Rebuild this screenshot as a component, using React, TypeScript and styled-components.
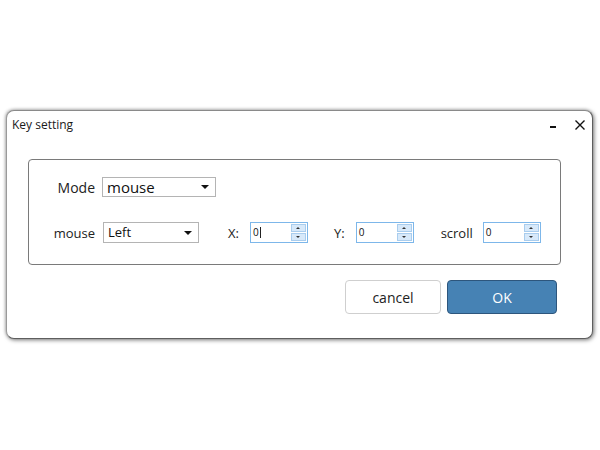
import React from 'react'
import styled, { createGlobalStyle } from 'styled-components'

const GlobalStyle = createGlobalStyle`
  html, body {
    margin: 0;
    padding: 0;
    background: #ffffff;
  }
  body {
    font-family: "Open Sans", "Noto Sans", "Liberation Sans", sans-serif;
    color: #1a1a1a;
  }
`

const Page = styled.div`
  width: 600px;
  height: 450px;
  padding: 110px 7px 0 6px;
  box-sizing: border-box;
`

const Window = styled.div`
  width: 587px;
  height: 229px;
  box-sizing: border-box;
  border: 1px solid #5e5e5e;
  border-left-color: #9a9a9a;
  border-top-color: #8a8a8a;
  border-radius: 8px;
  background: #fff;
  box-shadow: 1px 1px 4px rgba(0, 0, 0, 0.55), -1px -1px 3px rgba(0, 0, 0, 0.15);
  display: flex;
  flex-direction: column;
`

const TitleBar = styled.div`
  height: 27px;
  display: flex;
  align-items: center;
  padding: 0 7px 0 5px;
`

const Title = styled.div`
  flex: 1;
  font-size: 12px;
  color: #1a1a1a;
`

const WinButton = styled.button<{ $w: number; $lead: number }>`
  border: none;
  background: none;
  padding: 0;
  width: ${p => p.$w}px;
  height: 18px;
  margin-left: ${p => p.$lead}px;
  display: flex;
  align-items: center;
  justify-content: center;
`

const GroupBox = styled.div`
  margin: 21px 31px 0 21px;
  height: 106px;
  box-sizing: border-box;
  border: 1px solid #7a7a7a;
  border-radius: 4px;
  padding: 17px 0 0 0;
  display: flex;
  flex-direction: column;
  gap: 25px;
`

const Row = styled.div`
  display: flex;
  align-items: center;
`

const RowLabel = styled.div<{ $size: number }>`
  width: 66px;
  text-align: right;
  font-size: ${p => p.$size}px;
  color: #222;
  margin-right: ${p => (p.$size > 13 ? 7 : 8)}px;
`

const Select = styled.div<{ $w: number; $h: number; $size: number }>`
  width: ${p => p.$w}px;
  height: ${p => p.$h}px;
  box-sizing: border-box;
  border: 1px solid #b4b4b4;
  display: flex;
  align-items: center;
  padding: 0 6px 0 4px;
  font-size: ${p => p.$size}px;
  color: #111;
  background: #fff;
`

const SelectText = styled.span`
  flex: 1;
  line-height: 1;
`

const Caret = styled.span`
  width: 0;
  height: 0;
  border-left: 4px solid transparent;
  border-right: 4px solid transparent;
  border-top: 4px solid #111;
`

const Field = styled.div<{ $lead: number; $gap: number }>`
  display: flex;
  align-items: center;
  margin-left: ${p => p.$lead}px;
  gap: ${p => p.$gap}px;
  font-size: 13px;
  color: #222;
`

const Spin = styled.div`
  width: 58px;
  height: 21px;
  box-sizing: border-box;
  border: 1px solid #7db7ea;
  display: flex;
  background: #fff;
`

const SpinValue = styled.div`
  flex: 1;
  font-size: 10px;
  line-height: 19px;
  padding-left: 2px;
  color: #111;
  display: flex;
  align-items: center;
`

const Cursor = styled.span`
  width: 1px;
  height: 11px;
  background: #222;
  margin-left: 1px;
`

const SpinButtons = styled.div`
  width: 15px;
  display: flex;
  flex-direction: column;
  padding: 1px 1px 1px 0;
  gap: 1px;
`

const SpinButton = styled.div`
  flex: 1;
  background: #d7e9fa;
  border: 1px solid #a9cdee;
  display: flex;
  align-items: center;
  justify-content: center;
`

const Tri = styled.span<{ $up?: boolean }>`
  width: 0;
  height: 0;
  border-left: 2px solid transparent;
  border-right: 2px solid transparent;
  ${p => (p.$up ? 'border-bottom: 2px solid #333;' : 'border-top: 2px solid #333;')}
`

const Buttons = styled.div`
  display: flex;
  justify-content: flex-end;
  gap: 6px;
  margin: 15px 35px 0 0;
`

const Button = styled.button<{ $primary?: boolean; $w: number }>`
  width: ${p => p.$w}px;
  height: 34px;
  border-radius: 4px;
  font-family: inherit;
  font-size: 14px;
  border: 1px solid ${p => (p.$primary ? '#2d567d' : '#cfcfcf')};
  background: ${p => (p.$primary ? '#4682b4' : '#ffffff')};
  color: ${p => (p.$primary ? '#ffffff' : '#222222')};
  padding: 0;
`

function SpinBox({ value, caret }: { value: string; caret?: boolean }) {
  return (
    <Spin>
      <SpinValue>
        {value}
        {caret && <Cursor />}
      </SpinValue>
      <SpinButtons>
        <SpinButton>
          <Tri $up />
        </SpinButton>
        <SpinButton>
          <Tri />
        </SpinButton>
      </SpinButtons>
    </Spin>
  )
}

export default function App() {
  return (
    <>
      <GlobalStyle />
      <Page>
        <Window>
          <TitleBar>
            <Title>Key setting</Title>
            <WinButton aria-label="minimize" $w={6} $lead={0}>
              <svg width="6" height="8" viewBox="0 0 6 8">
                <rect x="0" y="5" width="6" height="2" fill="#111" />
              </svg>
            </WinButton>
            <WinButton aria-label="close" $w={10} $lead={19}>
              <svg width="10" height="10" viewBox="0 0 10 10">
                <path d="M0.5 0.5 L9.5 9.5 M9.5 0.5 L0.5 9.5" stroke="#111" strokeWidth="1.4" />
              </svg>
            </WinButton>
          </TitleBar>
          <GroupBox>
            <Row>
              <RowLabel $size={14}>Mode</RowLabel>
              <Select $w={114} $h={20} $size={15}>
                <SelectText>mouse</SelectText>
                <Caret />
              </Select>
            </Row>
            <Row>
              <RowLabel $size={13}>mouse</RowLabel>
              <Select $w={96} $h={21} $size={13}>
                <SelectText>Left</SelectText>
                <Caret />
              </Select>
              <Field $lead={29} $gap={11}>
                X:
                <SpinBox value="0" caret />
              </Field>
              <Field $lead={26} $gap={11}>
                Y:
                <SpinBox value="0" />
              </Field>
              <Field $lead={27} $gap={10}>
                scroll
                <SpinBox value="0" />
              </Field>
            </Row>
          </GroupBox>
          <Buttons>
            <Button $w={96}>cancel</Button>
            <Button $w={110} $primary>
              OK
            </Button>
          </Buttons>
        </Window>
      </Page>
    </>
  )
}
